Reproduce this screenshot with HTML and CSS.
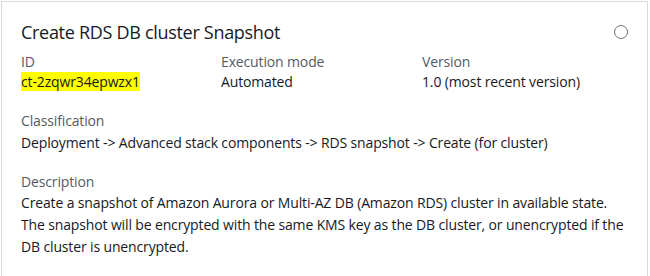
FILE: index.html
```html
<!DOCTYPE html>
<html>
<head>
<meta charset="utf-8">
<link rel="stylesheet" href="styles.css">
</head>
<body>
<div class="card">
  <div class="header">
    <h2 class="title">Create RDS DB cluster Snapshot</h2>
    <span class="radio"></span>
  </div>
  <div class="grid">
    <div class="field">
      <div class="label">ID</div>
      <div class="value"><span class="hl">ct-2zqwr34epwzx1</span></div>
    </div>
    <div class="field">
      <div class="label">Execution mode</div>
      <div class="value">Automated</div>
    </div>
    <div class="field">
      <div class="label">Version</div>
      <div class="value">1.0 (most recent version)</div>
    </div>
  </div>
  <div class="field block classif">
    <div class="label">Classification</div>
    <div class="value">Deployment -&gt; Advanced stack components -&gt; RDS snapshot -&gt; Create (for cluster)</div>
  </div>
  <div class="field block descr">
    <div class="label">Description</div>
    <div class="value">Create a snapshot of Amazon Aurora or Multi-AZ DB (Amazon RDS) cluster in available state. The snapshot will be encrypted with the same KMS key as the DB cluster, or unencrypted if the DB cluster is unencrypted.</div>
  </div>
</div>
</body>
</html>
```
FILE: styles.css
```css
html, body {
  margin: 0;
  background: #ffffff;
}
body {
  padding: 1px 2px 0 1px;
  font-family: "Open Sans", "Noto Sans", sans-serif;
  font-size: 14px;
  letter-spacing: -0.14px;
  color: #16191f;
}
.card {
  border: 1px solid #d5dbdb;
  border-bottom: none;
  height: 275px;
  padding: 16px 19px 0 19px;
  box-sizing: border-box;
  overflow: hidden;
}
.header {
  display: flex;
  justify-content: space-between;
  align-items: center;
}
.title {
  margin: 0;
  font-size: 18px;
  font-weight: 400;
  letter-spacing: -0.3px;
  line-height: 28px;
  color: #16191f;
}
.radio {
  width: 12px;
  height: 12px;
  border: 1px solid #687078;
  border-radius: 50%;
}
.grid {
  display: grid;
  grid-template-columns: 200px 201px 1fr;
  margin-top: 6px;
}
.label {
  color: #545b64;
  line-height: 20px;
}
.value {
  line-height: 20px;
}
.hl {
  background: #ffff00;
}
.block .value {
  line-height: 22px;
}
.classif {
  margin-top: 19px;
}
.classif .value {
  padding-top: 1px;
}
.descr {
  margin-top: 18px;
}
```
